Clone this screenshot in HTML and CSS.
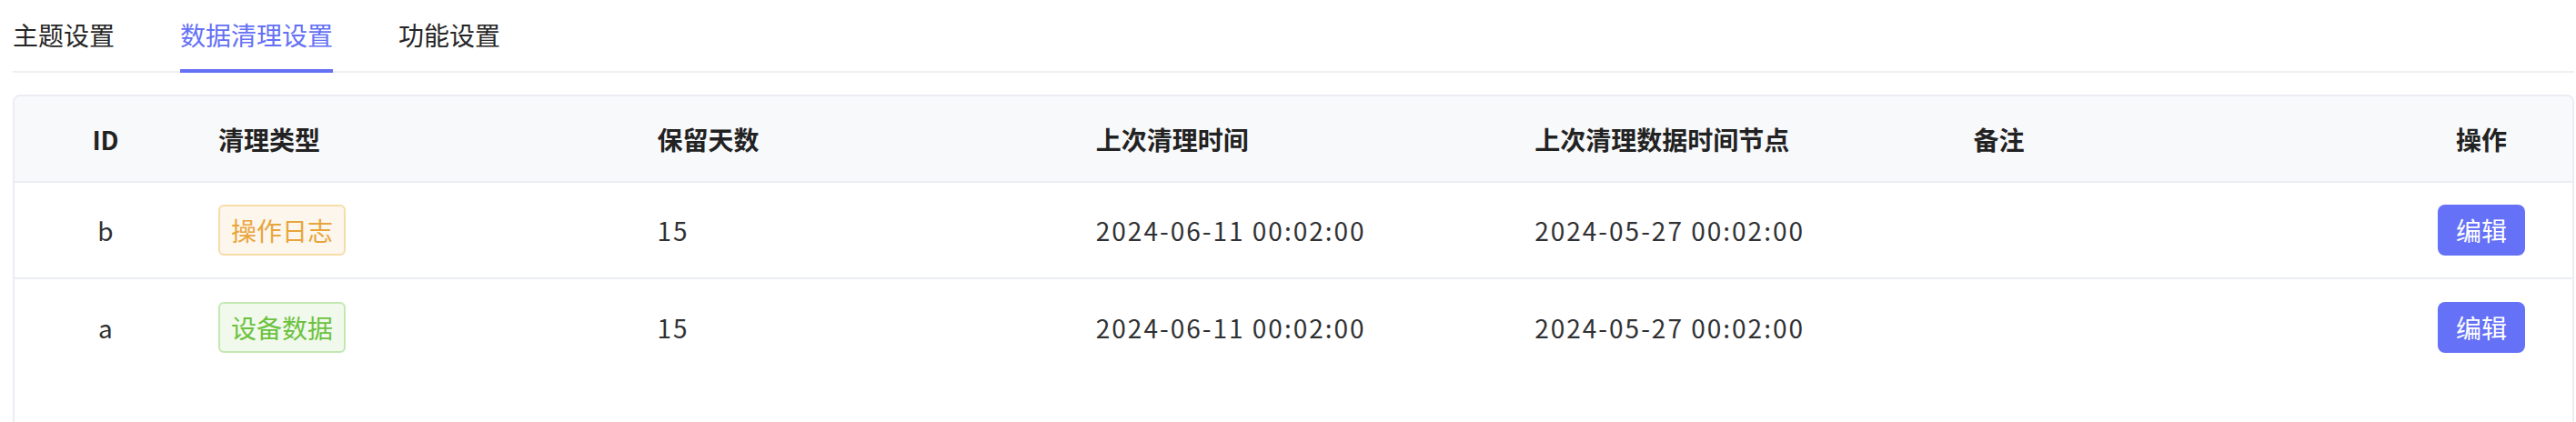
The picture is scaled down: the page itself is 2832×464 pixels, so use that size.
FILE: index.html
```html
<!DOCTYPE html>
<html lang="zh-CN">
<head>
<meta charset="utf-8">
<title>数据清理设置</title>
<link rel="stylesheet" href="styles.css">
</head>
<body>
<div class="page">
  <nav class="tabs">
    <span class="tab">主题设置</span>
    <span class="tab active">数据清理设置</span>
    <span class="tab">功能设置</span>
  </nav>
  <div class="table-card">
    <table class="data-table">
      <colgroup>
        <col class="col-id">
        <col class="col-mid">
        <col class="col-mid">
        <col class="col-mid">
        <col class="col-mid">
        <col class="col-mid">
        <col class="col-op">
      </colgroup>
      <thead>
        <tr>
          <th class="center">ID</th>
          <th>清理类型</th>
          <th>保留天数</th>
          <th>上次清理时间</th>
          <th>上次清理数据时间节点</th>
          <th>备注</th>
          <th class="center">操作</th>
        </tr>
      </thead>
      <tbody>
        <tr>
          <td class="center">b</td>
          <td><span class="tag tag-warning">操作日志</span></td>
          <td class="num">15</td>
          <td class="num">2024-06-11 00:02:00</td>
          <td class="num">2024-05-27 00:02:00</td>
          <td></td>
          <td class="center"><button class="btn-primary" type="button">编辑</button></td>
        </tr>
        <tr>
          <td class="center">a</td>
          <td><span class="tag tag-success">设备数据</span></td>
          <td class="num">15</td>
          <td class="num">2024-06-11 00:02:00</td>
          <td class="num">2024-05-27 00:02:00</td>
          <td></td>
          <td class="center"><button class="btn-primary" type="button">编辑</button></td>
        </tr>
      </tbody>
    </table>
  </div>
</div>
</body>
</html>
```

FILE: styles.css
```css
html, body {
  margin: 0;
  background: #ffffff;
  font-family: "Noto Sans CJK SC", "Noto Sans", sans-serif;
  color: #303133;
}

.page {
  padding-left: 14px;
  width: 2816px;
}

.tabs {
  display: flex;
  gap: 72px;
  height: 80px;
  box-shadow: inset 0 -2px 0 #eeeff3;
}

.tab {
  font-size: 28px;
  line-height: 76px;
  border-bottom: 4px solid transparent;
  color: #262626;
}

.tab.active {
  color: #6571f5;
  border-bottom-color: #6571f5;
}

.table-card {
  margin-top: 24px;
  border: 2px solid #ebedf3;
  border-radius: 8px;
  height: 420px;
  overflow: hidden;
}

.data-table {
  width: 100%;
  border-collapse: separate;
  border-spacing: 0;
  table-layout: fixed;
  font-size: 28px;
}

.col-id,
.col-op {
  width: 200px;
}

.data-table th,
.data-table td {
  box-sizing: border-box;
  padding: 0 24px;
  text-align: left;
  vertical-align: middle;
  white-space: nowrap;
}

.data-table th {
  height: 95px;
  background: #f8f9fb;
  border-bottom: 2px solid #ebedf3;
  font-weight: 600;
  color: #222222;
}

.data-table td {
  height: 106px;
  color: #303133;
}

.data-table tbody tr:not(:last-child) td {
  border-bottom: 2px solid #ebedf3;
}

.data-table .center {
  text-align: center;
}

.num {
  letter-spacing: 2px;
}

.tag {
  display: inline-block;
  box-sizing: border-box;
  height: 56px;
  line-height: 52px;
  padding: 0 12px;
  border: 2px solid;
  border-radius: 6px;
  font-size: 28px;
}

.tag-warning {
  color: #e8a53c;
  background: #fdf6ec;
  border-color: #f7dcaa;
}

.tag-success {
  color: #6cc23f;
  background: #f0f9eb;
  border-color: #c4e8b2;
}

.btn-primary {
  display: inline-block;
  height: 56px;
  padding: 0 20px;
  border: none;
  border-radius: 8px;
  background: #6571f6;
  color: #ffffff;
  font-family: inherit;
  font-size: 28px;
  line-height: 56px;
}
```
